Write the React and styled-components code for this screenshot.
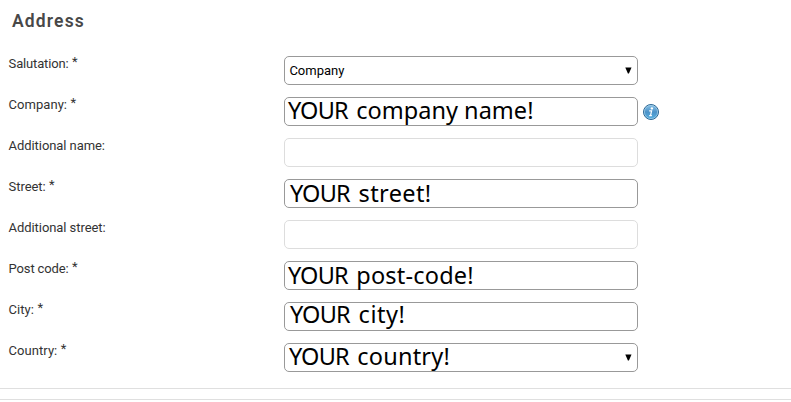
import React from 'react';
import styled, { createGlobalStyle } from 'styled-components';

const GlobalStyle = createGlobalStyle`
  * { box-sizing: border-box; }
  body { margin: 0; background: #fff; overflow: hidden; }
`;

const Page = styled.main`
  width: 791px;
  height: 402px;
  overflow: hidden;
  background: #fff;
  color: #333;
  font-family: Roboto, 'Open Sans', sans-serif;
`;

const Heading = styled.h2`
  margin: 0;
  height: 56px;
  padding: 10px 0 0 12px;
  color: #484848;
  font-size: 17.5px;
  font-weight: 600;
  line-height: 22px;
  letter-spacing: 1.15px;
`;

const Form = styled.form`
  display: grid;
  row-gap: 12px;
`;

const Row = styled.div`
  display: grid;
  grid-template-columns: 284px 354px auto;
  height: 29px;
`;

const Label = styled.label`
  padding-left: 8.6px;
  font-size: 13px;
  line-height: 15px;
  letter-spacing: ${p => p.$spacing ?? -0.07}px;
  white-space: nowrap;
`;

const Required = styled.span`
  position: relative;
  top: -2px;
  margin-left: 3.5px;
`;

const Field = styled.div`
  display: flex;
  justify-content: space-between;
  height: 29px;
  border: 1px solid ${p => (p.$optional ? '#ddd' : '#999')};
  border-radius: 5px;
  background: #fff;
  color: #000;
`;

const SmallValue = styled.span`
  padding-left: 4.4px;
  font-size: 13px;
  line-height: 27px;
`;

const LargeValue = styled.span`
  height: 27px;
  margin-top: ${p => p.$top}px;
  padding-left: ${p => p.$left}px;
  font-family: 'Noto Sans', 'Open Sans', sans-serif;
  font-size: 23.5px;
  line-height: 27px;
  letter-spacing: ${p => p.$spacing}px;
  white-space: pre;
`;

const Your = styled.span`
  margin-right: 2px;
  letter-spacing: -0.75px;
`;

const Arrow = styled.svg`
  width: 7px;
  height: 7px;
  margin: 10px 5.5px 0 auto;
`;

const InfoIcon = styled.svg`
  width: 18px;
  height: 18px;
  margin: 6px 0 0 4px;
`;

const Divider = styled.div`
  height: 11px;
  margin-top: ${p => p.$top}px;
  border-top: 1px solid #dfdfdf;
`;

const rows = [
  { label: 'Salutation:', required: true, small: 'Company', select: true, ls: -0.16 },
  { label: 'Company:', required: true, value: 'company name!', left: 3, top: -1, spacing: 0.03, info: true, ls: 0.04 },
  { label: 'Additional name:' },
  { label: 'Street:', required: true, value: 'street!', left: 5, top: 0, spacing: 0.4 },
  { label: 'Additional street:' },
  { label: 'Post code:', required: true, value: 'post-code!', left: 3, top: 0, spacing: 0.2, ls: -0.15 },
  { label: 'City:', required: true, value: 'city!', left: 5, top: -2, spacing: 0.5, ls: 0.05 },
  { label: 'Country:', required: true, value: 'country!', left: 4, top: -1, spacing: 0.2, select: true, ls: 0.05 },
];

function Info() {
  return (
    <InfoIcon viewBox="0 0 18 18" aria-label="Information">
      <defs>
        <linearGradient id="info-fill" x1="0" y1="0" x2="0" y2="1">
          <stop offset="0" stopColor="#8cc4e8" />
          <stop offset="0.5" stopColor="#4c92c8" />
          <stop offset="1" stopColor="#55b0e2" />
        </linearGradient>
      </defs>
      <circle cx="9" cy="9" r="7.5" fill="url(#info-fill)" stroke="#2f6894" />
      <circle cx="9" cy="9" r="6.6" fill="none" stroke="#a5d0ea" strokeWidth="0.7" />
      <circle cx="9.9" cy="5.4" r="1.2" fill="#fff" />
      <path d="M7.2 7.9h2.4L8.5 12.6h1.4M7.2 12.6h1.3" fill="none" stroke="#fff" strokeWidth="1.2" />
    </InfoIcon>
  );
}

export default function App() {
  return (
    <Page>
      <GlobalStyle />
      <Heading>Address</Heading>
      <Form>
        {rows.map(row => (
          <Row key={row.label}>
            <Label $spacing={row.ls}>
              {row.label}
              {row.required && <Required>*</Required>}
            </Label>
            <Field $optional={!row.required}>
              {row.small && <SmallValue>{row.small}</SmallValue>}
              {row.value && (
                <LargeValue $left={row.left} $top={row.top} $spacing={row.spacing}>
                  <Your>YOUR</Your> {row.value}
                </LargeValue>
              )}
              {row.select && (
                <Arrow viewBox="0 0 7 7">
                  <path d="M0.3 0.5h6.2L3.9 6.5h-1z" fill="#000" />
                </Arrow>
              )}
            </Field>
            {row.info && <Info />}
          </Row>
        ))}
      </Form>
      <Divider $top={16} />
      <Divider $top={0} />
    </Page>
  );
}
